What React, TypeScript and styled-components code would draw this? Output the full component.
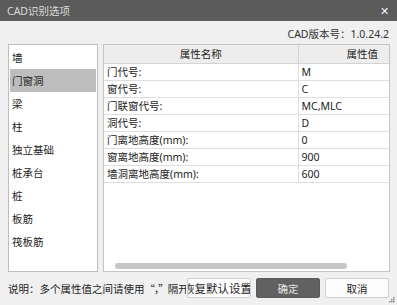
import React from "react";
import styled, { createGlobalStyle } from "styled-components";

const Global = createGlobalStyle`
  html, body { margin: 0; padding: 0; background: #f0f0f0; }
  * { box-sizing: border-box; }
`;

const FONT = `"Noto Sans", "Noto Sans CJK SC", sans-serif`;
const CJK = `"Noto Sans CJK SC", sans-serif`;

const Window = styled.div`
  position: relative;
  width: 397px;
  height: 305px;
  background: #f0f0f0;
  font-family: ${FONT};
  color: #1c1c1c;
  display: flex;
  flex-direction: column;
  overflow: hidden;
`;

const TitleBar = styled.div`
  height: 21px;
  flex: none;
  background: #5b5b5b;
  color: #dcdcdc;
  display: flex;
  align-items: center;
  justify-content: space-between;
  padding: 0 8px 0 7px;
  font-size: 10.5px;
`;

const Close = styled.span`
  color: #f2f2f2;
  font-size: 11px;
  line-height: 1;
`;

const VersionRow = styled.div`
  height: 23px;
  flex: none;
  display: flex;
  align-items: center;
  justify-content: flex-end;
  padding: 1px 8px 0 0;
  font-size: 10.5px;
  color: #333;
`;

const Main = styled.div`
  height: 228px;
  flex: none;
  display: flex;
  gap: 5px;
  padding: 0 7px 0 8px;
`;

const List = styled.div`
  width: 90px;
  flex: none;
  background: #fff;
  border: 1px solid #bdbdbd;
  padding: 1px 1px;
  display: flex;
  flex-direction: column;
`;

const ListItem = styled.div<{ $selected?: boolean }>`
  height: 23px;
  flex: none;
  display: flex;
  align-items: center;
  padding-left: 2px;
  font-size: 10.5px;
  background: ${(p) => (p.$selected ? "#bdbdbd" : "transparent")};
`;

const TableBox = styled.div`
  flex: 1;
  background: #fff;
  border: 1px solid #c4c4c4;
  display: flex;
  flex-direction: column;
`;

const Table = styled.table`
  border-collapse: collapse;
  width: 100%;
  table-layout: fixed;
  font-size: 10.5px;
`;

const HeadCell = styled.th<{ $align: "center" | "right" }>`
  height: 18px;
  padding: 0 ${(p) => (p.$align === "right" ? "11px" : "0")} 0 0;
  font-weight: normal;
  background: #ededed;
  text-align: ${(p) => p.$align};
  border-bottom: 1px solid #d4d4d4;
  border-right: 1px solid #d4d4d4;
  &:last-child { border-right: none; }
`;

const Cell = styled.td`
  height: 17px;
  padding: 0 0 0 3px;
  border-bottom: 1px solid #dedede;
  border-right: 1px solid #dedede;
  white-space: nowrap;
  overflow: hidden;
  &:last-child { border-right: none; }
`;

const NameCol = styled.col`
  width: 194px;
`;

const ScrollArea = styled.div`
  margin-top: auto;
  height: 10px;
  padding: 2px 0 2px 11px;
`;

const Thumb = styled.div`
  width: 232px;
  height: 6px;
  border-radius: 3px;
  background: #c6c6c6;
`;

const Footer = styled.div`
  flex: 1;
  display: flex;
  align-items: flex-start;
  padding: 6px 8px 0 8px;
  gap: 5px;
`;

const Note = styled.div`
  flex: 1;
  min-width: 0;
  height: 20px;
  margin-right: -4px;
  display: flex;
  align-items: center;
  white-space: nowrap;
  overflow: hidden;
  font-size: 10.5px;
  color: #222;
`;

const Quote = styled.span`
  font-family: ${CJK};
  letter-spacing: -1px;
  flex: none;
`;

const Button = styled.button<{ $primary?: boolean; $clipStart?: boolean }>`
  width: 64px;
  height: 20px;
  flex: none;
  padding: 0;
  margin: 0;
  display: flex;
  align-items: center;
  justify-content: ${(p) => (p.$clipStart ? "flex-end" : "center")};
  overflow: hidden;
  white-space: nowrap;
  font-family: ${FONT};
  font-size: 10.5px;
  border-radius: 2px;
  border: 1px solid ${(p) => (p.$primary ? "#5a5a5a" : "#cfcfcf")};
  background: ${(p) => (p.$primary ? "#616161" : "#fdfdfd")};
  color: ${(p) => (p.$primary ? "#e6e6e6" : "#1c1c1c")};
`;

const WideLabel = styled.span`
  flex: none;
  font-size: 11.5px;
  margin-right: -2px;
`;

const Grip = styled.svg`
  position: absolute;
  right: 2px;
  bottom: 2px;
`;

const categories = ["墙", "门窗洞", "梁", "柱", "独立基础", "桩承台", "桩", "板筋", "筏板筋"];

const rows: [string, string][] = [
  ["门代号:", "M"],
  ["窗代号:", "C"],
  ["门联窗代号:", "MC,MLC"],
  ["洞代号:", "D"],
  ["门离地高度(mm):", "0"],
  ["窗离地高度(mm):", "900"],
  ["墙洞离地高度(mm):", "600"],
];

export default function App() {
  return (
    <>
      <Global />
      <Window>
        <TitleBar>
          <span>CAD识别选项</span>
          <Close>✕</Close>
        </TitleBar>
        <VersionRow>CAD版本号：1.0.24.2</VersionRow>
        <Main>
          <List>
            {categories.map((c) => (
              <ListItem key={c} $selected={c === "门窗洞"}>
                {c}
              </ListItem>
            ))}
          </List>
          <TableBox>
            <Table>
              <colgroup>
                <NameCol />
                <col />
              </colgroup>
              <thead>
                <tr>
                  <HeadCell $align="center">属性名称</HeadCell>
                  <HeadCell $align="right">属性值</HeadCell>
                </tr>
              </thead>
              <tbody>
                {rows.map(([k, v]) => (
                  <tr key={k}>
                    <Cell>{k}</Cell>
                    <Cell>{v}</Cell>
                  </tr>
                ))}
              </tbody>
            </Table>
            <ScrollArea>
              <Thumb />
            </ScrollArea>
          </TableBox>
        </Main>
        <Footer>
          <Note>
            说明：多个属性值之间请使用<Quote>“，”</Quote>隔开
          </Note>
          <Button $clipStart>
            <WideLabel>恢复默认设置</WideLabel>
          </Button>
          <Button $primary>确定</Button>
          <Button>取消</Button>
        </Footer>
        <Grip width="6" height="6" viewBox="0 0 6 6">
          <rect x="4" y="0" width="1.5" height="1.5" fill="#8a8a8a" />
          <rect x="2" y="2" width="1.5" height="1.5" fill="#8a8a8a" />
          <rect x="4" y="2" width="1.5" height="1.5" fill="#8a8a8a" />
          <rect x="0" y="4" width="1.5" height="1.5" fill="#8a8a8a" />
          <rect x="2" y="4" width="1.5" height="1.5" fill="#8a8a8a" />
          <rect x="4" y="4" width="1.5" height="1.5" fill="#8a8a8a" />
        </Grip>
      </Window>
    </>
  );
}
